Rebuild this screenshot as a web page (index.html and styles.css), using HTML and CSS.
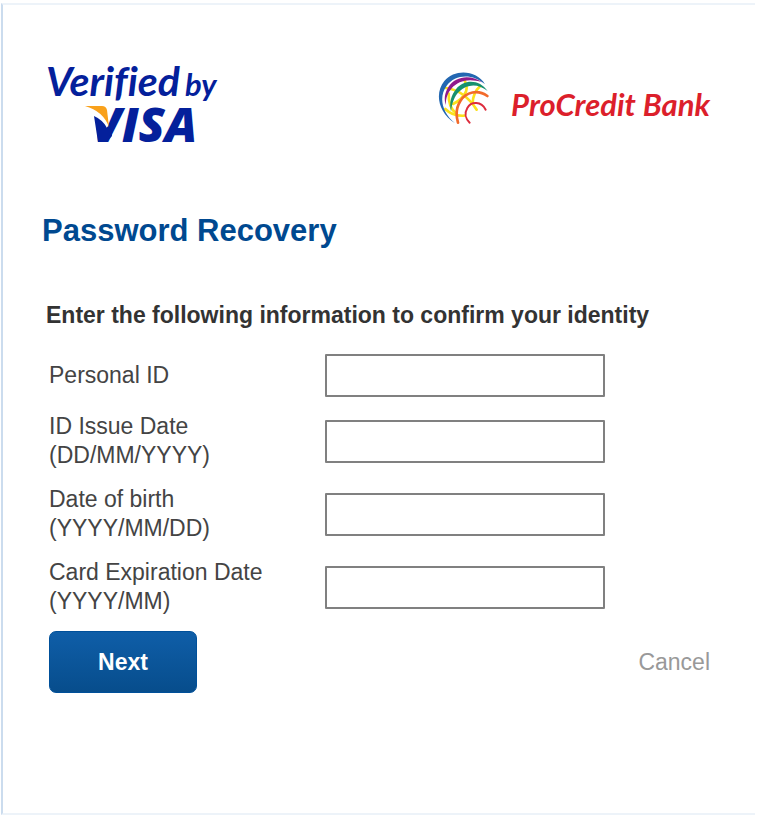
FILE: index.html
```html
<!DOCTYPE html>
<html lang="en">
<head>
    <meta charset="UTF-8">
    <meta name="viewport" content="width=device-width, initial-scale=1.0">
    <title>Password Recovery</title>
    <link rel="stylesheet" href="styles.css">
</head>
<body>
    <div class="panel">
        <header class="logos">
            <svg class="visa-logo" viewBox="0 0 180 90" role="img" aria-label="Verified by VISA">
                <text class="verified" x="0" y="35">Verified</text>
                <text class="by" x="139" y="35">by</text>
                <text class="visa" x="46" y="81">VISA</text>
                <path fill="#fff" d="M36 43h25l1 23-15-9-11-8z"/>
                <path fill="#04209b" d="M48 55q9 4 13 12l3-5 2 13-6 6h-8z"/>
                <path fill="#f9a11b" d="M39 45h17q4 0 5 4l2 17q-6-16-24-21z"/>
            </svg>
            <div class="bank">
                <svg class="globe" viewBox="36 36 156 159" aria-hidden="true">
                    <g fill="none" stroke-linecap="round">
                        <g stroke="#fbe11c" stroke-width="8">
                            <path d="M62 84q55 6 93 65"/>
                            <path d="M119 62q9 20 4 33-11 24-39 37"/>
                            <path d="M165 79q-22 20-22 52"/>
                            <path d="M61 147q22 22 57 20"/>
                            <path d="M71 101q-1 40 22 59"/>
                        </g>
                        <path fill="#2367b1" d="M180 73C157 32 91 24 58 63c-29 35-20 93 32 127-41-34-49-80-25-113C91 42 143 40 180 73z"/>
                        <path fill="#8f1a8b" d="M171 67C137 42 91 48 70 81c-11 18-13 35-8 54 1-22 6-36 17-49 22-25 54-31 92-19z"/>
                        <path fill="#16906f" d="M188 93c-23-34-68-38-94-7-16 19-22 43-16 68 3-25 10-45 24-59 25-25 59-24 86-2z"/>
                        <path stroke="#f26a2a" stroke-width="8" d="M187 108c-28-20-64-13-81 15-12 19-14 41-7 65"/>
                        <path stroke="#dd2b3c" stroke-width="6" d="M182 149c-13-25-43-26-55-5-9 15-6 32 7 44"/>
                    </g>
                </svg>
                <span class="bank-name">ProCredit Bank</span>
            </div>
        </header>

        <h1>Password Recovery</h1>
        <h2>Enter the following information to confirm your identity</h2>

        <form>
            <div class="fields">
                <label for="personalId">Personal ID</label>
                <input type="text" id="personalId" name="personalId">

                <label for="issueDate">ID Issue Date<br>(DD/MM/YYYY)</label>
                <input type="text" id="issueDate" name="issueDate">

                <label for="birthDate">Date of birth<br>(YYYY/MM/DD)</label>
                <input type="text" id="birthDate" name="birthDate">

                <label for="expiration">Card Expiration Date<br>(YYYY/MM)</label>
                <input type="text" id="expiration" name="expiration">
            </div>
            <div class="actions">
                <button class="next" type="button">Next</button>
                <a class="cancel" href="#">Cancel</a>
            </div>
        </form>
    </div>
</body>
</html>
```
FILE: styles.css
```css
body {
    margin: 0;
    padding: 3px 6px 8px 1px;
    background-color: #fff;
    font-family: "Liberation Sans", Arial, sans-serif;
    color: #444;
}

.panel {
    border: 2px solid #edf3f9;
    border-left-color: #cbdcee;
    border-right: none;
    padding: 56px 45px 120px 39px;
}

.logos {
    display: flex;
    justify-content: space-between;
    align-items: flex-start;
    padding-left: 4px;
}

.visa-logo {
    width: 180px;
    height: 90px;
    overflow: visible;
    fill: #04209b;
    font-family: Lato, sans-serif;
    font-style: italic;
    font-variant-ligatures: none;
}

.verified {
    font-size: 41px;
    font-weight: 700;
}

.by {
    font-size: 31px;
    font-weight: 700;
}

.visa {
    font-family: "Open Sans", sans-serif;
    font-size: 48px;
    font-weight: 800;
}

.bank {
    display: flex;
    align-items: flex-start;
    gap: 22px;
    padding-top: 11px;
}

.globe {
    width: 52px;
    height: 53px;
}

.bank-name {
    color: #dc1f2b;
    font-family: Lato, sans-serif;
    font-size: 31px;
    font-style: italic;
    font-weight: 700;
    line-height: 64px;
    white-space: nowrap;
}

h1 {
    margin: 60px 0 0;
    color: #004990;
    font-size: 31px;
    line-height: 40px;
}

h2 {
    margin: 49px 0 0 4px;
    color: #333;
    font-size: 23px;
    line-height: 30px;
}

form {
    margin: 24px 0 0 7px;
}

.fields {
    display: grid;
    grid-template-columns: 276px 280px;
    align-items: center;
    row-gap: 15px;
    font-size: 23px;
    line-height: 29px;
}

.fields input {
    box-sizing: border-box;
    width: 100%;
    height: 43px;
    padding: 4px 8px;
    border: 2px solid #808080;
    border-radius: 1px;
    font: inherit;
}

.actions {
    display: flex;
    justify-content: space-between;
    align-items: center;
    margin-top: 15px;
}

.next {
    width: 148px;
    height: 62px;
    border: 1px solid #00509a;
    border-radius: 7px;
    background: linear-gradient(#0f5ea8, #074d8c);
    color: #fff;
    font-family: inherit;
    font-size: 23px;
    font-weight: bold;
    cursor: pointer;
}

.cancel {
    color: #999;
    font-size: 23px;
    text-decoration: none;
}
```
